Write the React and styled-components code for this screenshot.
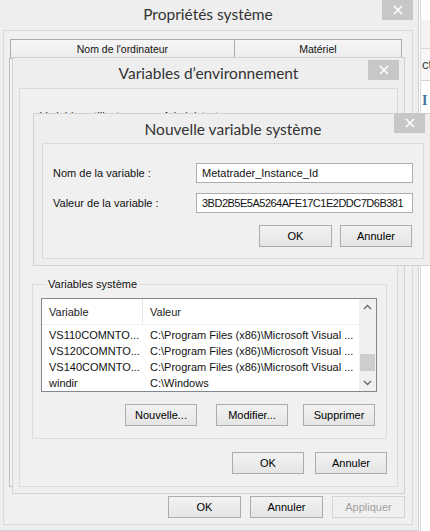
import React from "react";
import styled, { createGlobalStyle } from "styled-components";

const GlobalStyle = createGlobalStyle`
  html, body {
    margin: 0;
    padding: 0;
    background: #ffffff;
  }
  body {
    font-family: "Liberation Sans", Arial, sans-serif;
    font-size: 11px;
    color: #000;
  }
  * {
    box-sizing: border-box;
  }
`;

const Desktop = styled.div`
  position: relative;
  width: 430px;
  height: 531px;
  overflow: hidden;
  background: #ffffff;
`;

// windows sit on the desktop at their own coordinates
const Frame = styled.div`
  position: absolute;
  left: ${({ $x }) => $x}px;
  top: ${({ $y }) => $y}px;
  width: ${({ $w }) => $w}px;
  height: ${({ $h }) => $h}px;
  background: #eeeeee;
  border: 1px solid #d2d2d2;
  display: flex;
  flex-direction: column;
  padding: 0 ${({ $side }) => $side}px ${({ $bottom }) => $bottom}px;
`;

const TitleBar = styled.div`
  position: relative;
  flex: none;
  height: ${({ $h }) => $h}px;
  display: flex;
  align-items: center;
  justify-content: center;
  font-family: Lato, "Noto Sans", sans-serif;
  font-size: 15.5px;
  color: #333;
`;

const CloseBox = styled.div`
  position: absolute;
  right: ${({ $right }) => $right}px;
  top: ${({ $top }) => $top}px;
  width: 31px;
  height: 20px;
  background: #c7c7c7;
  display: flex;
  align-items: center;
  justify-content: center;
`;

const Client = styled.div`
  flex: 1;
  background: #f0f0f0;
  border: 1px solid #dadada;
  display: flex;
  flex-direction: column;
  padding: ${({ $pad }) => $pad};
`;

const Close = ({ right, top }) => (
  <CloseBox $right={right} $top={top}>
    <svg width="10" height="10" viewBox="0 0 10 10">
      <path d="M1 1 L9 9 M9 1 L1 9" stroke="#fff" strokeWidth="1.6" />
    </svg>
  </CloseBox>
);

const Button = styled.div`
  flex: none;
  width: ${({ $w }) => $w || 73}px;
  height: 22px;
  margin-left: ${({ $ml }) => $ml || 0}px;
  border: 1px solid ${({ $disabled }) => ($disabled ? "#d4d4d4" : "#acacac")};
  background: ${({ $disabled }) =>
    $disabled ? "#f0f0f0" : "linear-gradient(#f2f2f2, #e5e5e5)"};
  display: flex;
  align-items: center;
  justify-content: center;
  color: ${({ $disabled }) => ($disabled ? "#a0a0a0" : "#000")};
`;

const ButtonRow = styled.div`
  flex: none;
  display: flex;
  justify-content: flex-end;
  margin: ${({ $m }) => $m};
`;

/* --- Propriétés système --- */

const Tabs = styled.div`
  display: flex;
  height: 19px;
  margin: 8px 10px 0 7px;
`;

const Tab = styled.div`
  flex: ${({ $grow }) => $grow};
  border: 1px solid #acacac;
  border-bottom: none;
  margin-left: -1px;
  background: linear-gradient(#f6f6f6, #ececec);
  display: flex;
  align-items: center;
  justify-content: center;
  font-size: 10.5px;
  color: #111;
`;

const TabPage = styled.div`
  flex: 1;
  margin: 0 9px 0 5px;
  border: 1px solid #bdbdbd;
  background: #f6f6f6;
`;

/* --- right edge of an app behind --- */

const BackApp = styled.div`
  position: absolute;
  left: 420px;
  top: 0;
  width: 40px;
  height: 531px;
  background: #fff;
  border-left: 1px solid #dcdcdc;
  display: flex;
  flex-direction: column;
`;

const BackBand = styled.div`
  height: ${({ $h }) => $h}px;
  background: ${({ $bg }) => $bg};
  border-bottom: ${({ $line }) => ($line ? "1px solid #d6d6d6" : "none")};
  display: flex;
  align-items: center;
  padding-left: 1px;
  font-size: 13px;
  color: #444;
`;

const BackGlyph = styled.span`
  font-family: "Liberation Serif", serif;
  font-weight: bold;
  font-size: 14px;
  color: #4a6fa5;
`;

/* --- Variables d'environnement --- */

const HiddenLabel = styled.div`
  margin: 21px 0 0 20px;
  height: 168px;
  color: #222;
`;

const Group = styled.fieldset`
  margin: ${({ $m }) => $m};
  padding: ${({ $pad }) => $pad};
  border: 1px solid #dcdcdc;
  min-width: 0;
`;

const Legend = styled.legend`
  padding: 0 2px;
  margin-left: 5px;
  color: #111;
`;

const ListBox = styled.div`
  display: flex;
  height: 94px;
  border: 1px solid #828790;
  background: #fff;
`;

const ListBody = styled.div`
  flex: 1;
  display: flex;
  flex-direction: column;
`;

const ListHead = styled.div`
  display: grid;
  grid-template-columns: 101px 1fr;
  height: 26px;
  border-bottom: 1px solid #f0f0f0;
  margin-bottom: 2px;
`;

const HeadCell = styled.div`
  display: flex;
  align-items: center;
  padding-left: 7px;
  border-right: ${({ $div }) => ($div ? "1px solid #e5e5e5" : "none")};
  color: #222;
`;

const ListRow = styled.div`
  display: grid;
  grid-template-columns: 101px 1fr;
  height: 16px;
  align-items: center;
`;

const Cell = styled.div`
  padding-left: 7px;
  white-space: nowrap;
  overflow: hidden;
  color: #111;
`;

const ScrollBar = styled.div`
  flex: none;
  width: 17px;
  background: #f0f0f0;
  display: flex;
  flex-direction: column;
`;

const ArrowSlot = styled.div`
  flex: none;
  height: 16px;
  display: flex;
  align-items: center;
  justify-content: center;
`;

const ScrollTrack = styled.div`
  flex: 1;
  padding-top: 39px;
`;

const Thumb = styled.div`
  height: 17px;
  margin: 0 1px;
  background: #cdcdcd;
`;

const Chevron = ({ down }) => (
  <svg width="9" height="6" viewBox="0 0 9 6">
    <path
      d={down ? "M1 1 L4.5 4.5 L8 1" : "M1 5 L4.5 1.5 L8 5"}
      stroke="#6a6a6a"
      strokeWidth="1.4"
      fill="none"
    />
  </svg>
);

/* --- Nouvelle variable système --- */

const FieldRow = styled.div`
  display: flex;
  align-items: center;
  margin-top: ${({ $mt }) => $mt}px;
  padding: 0 10px;
`;

const FieldLabel = styled.div`
  width: 143px;
  color: #111;
`;

const TextBox = styled.div`
  flex: 1;
  height: 20px;
  background: #fff;
  border: 1px solid #adadad;
  display: flex;
  align-items: center;
  padding-left: 5px;
  color: #111;
  white-space: nowrap;
  overflow: hidden;
  letter-spacing: ${({ $tight }) => ($tight ? "-0.5px" : "0")};
`;

const rows = [
  ["VS110COMNTO...", "C:\\Program Files (x86)\\Microsoft Visual ..."],
  ["VS120COMNTO...", "C:\\Program Files (x86)\\Microsoft Visual ..."],
  ["VS140COMNTO...", "C:\\Program Files (x86)\\Microsoft Visual ..."],
  ["windir", "C:\\Windows"],
];

export default function App() {
  return (
    <>
      <GlobalStyle />
      <Desktop>
        <BackApp>
          <BackBand $h={20} $bg="#ffffff" />
          <BackBand $h={29} $bg="#f3f3f3" $line />
          <BackBand $h={32} $bg="#f7f7f7" $line>
            ct
          </BackBand>
          <BackBand $h={40} $bg="#ffffff">
            <BackGlyph>I</BackGlyph>
          </BackBand>
        </BackApp>

        <Frame $x={-3} $y={-3} $w={422} $h={534} $side={5} $bottom={5}>
          <TitleBar $h={32}>
            Propriétés système
            <Close right={0} top={2} />
          </TitleBar>
          <Client $pad="0">
            <Tabs>
              <Tab $grow={224}>Nom de l'ordinateur</Tab>
              <Tab $grow={167}>Matériel</Tab>
            </Tabs>
            <TabPage />
            <ButtonRow $m="9px 7px 6px 0">
              <Button>OK</Button>
              <Button $ml={9}>Annuler</Button>
              <Button $ml={9} $disabled>
                Appliquer
              </Button>
            </ButtonRow>
          </Client>
        </Frame>

        <Frame $x={12} $y={57} $w={393} $h={437} $side={6} $bottom={6}>
          <TitleBar $h={30}>
            Variables d’environnement
            <Close right={-1} top={2} />
          </TitleBar>
          <Client $pad="0">
            <HiddenLabel>Variables utilisateur pour Administrateur</HiddenLabel>
            <Group $m="0 10px 0 12px" $pad="8px 9px 12px 8px">
              <Legend>Variables système</Legend>
              <ListBox>
                <ListBody>
                  <ListHead>
                    <HeadCell $div>Variable</HeadCell>
                    <HeadCell>Valeur</HeadCell>
                  </ListHead>
                  {rows.map(([name, value]) => (
                    <ListRow key={name}>
                      <Cell>{name}</Cell>
                      <Cell>{value}</Cell>
                    </ListRow>
                  ))}
                </ListBody>
                <ScrollBar>
                  <ArrowSlot>
                    <Chevron />
                  </ArrowSlot>
                  <ScrollTrack>
                    <Thumb />
                  </ScrollTrack>
                  <ArrowSlot>
                    <Chevron down />
                  </ArrowSlot>
                </ScrollBar>
              </ListBox>
              <ButtonRow $m="12px 2px 0 0">
                <Button $w={72}>Nouvelle...</Button>
                <Button $w={72} $ml={19}>
                  Modifier...
                </Button>
                <Button $w={72} $ml={15}>
                  Supprimer
                </Button>
              </ButtonRow>
            </Group>
            <ButtonRow $m="13px 10px 0 0">
              <Button $w={72}>OK</Button>
              <Button $w={72} $ml={11}>
                Annuler
              </Button>
            </ButtonRow>
          </Client>
        </Frame>

        <Frame $x={33} $y={113} $w={400} $h={153} $side={8} $bottom={6}>
          <TitleBar $h={29}>
            Nouvelle variable système
            <Close right={-1} top={-1} />
          </TitleBar>
          <Client $pad="0 0 10px 0">
            <FieldRow $mt={19}>
              <FieldLabel>Nom de la variable :</FieldLabel>
              <TextBox>Metatrader_Instance_Id</TextBox>
            </FieldRow>
            <FieldRow $mt={10}>
              <FieldLabel>Valeur de la variable :</FieldLabel>
              <TextBox $tight>3BD2B5E5A5264AFE17C1E2DDC7D6B381</TextBox>
            </FieldRow>
            <ButtonRow $m="12px 11px 0 0">
              <Button>OK</Button>
              <Button $w={72} $ml={8}>
                Annuler
              </Button>
            </ButtonRow>
          </Client>
        </Frame>
      </Desktop>
    </>
  );
}
